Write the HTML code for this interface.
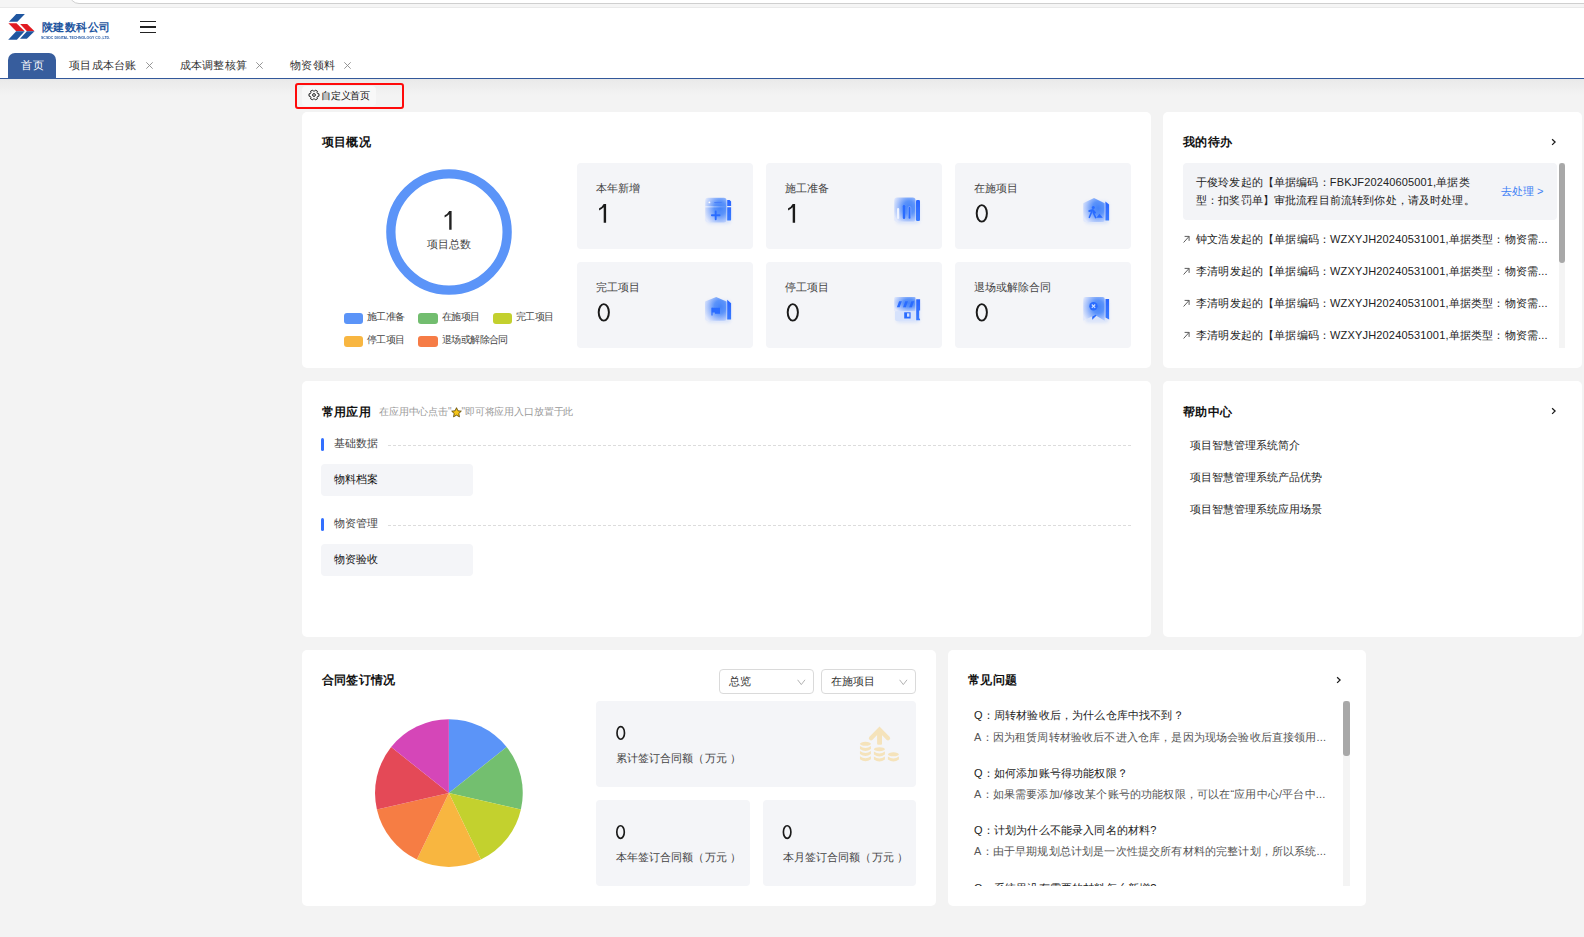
<!DOCTYPE html>
<html><head><meta charset="utf-8">
<style>
*{box-sizing:border-box;margin:0;padding:0}
html,body{width:1584px;height:937px;overflow:hidden;background:#f3f3f3;font-family:"Liberation Sans",sans-serif;color:#333}
.abs{position:absolute}
.t{position:absolute;white-space:nowrap;line-height:1}
#topbar{position:absolute;left:0;top:0;width:1584px;height:8px;background:#f5f5f5;border-bottom:1px solid #e9e9e9}
#addr{position:absolute;left:68.5px;top:-20px;width:1600px;height:24px;background:#fff;border:1px solid #cfcfcf;border-radius:10px}
#header{position:absolute;left:0;top:8px;width:1584px;height:70px;background:#fff}
#tabline{position:absolute;left:0;top:78px;width:1584px;height:1px;background:#33589a}
#shadow{position:absolute;left:0;top:79px;width:1584px;height:16px;background:linear-gradient(#e9e9e9,#f3f3f3)}
.card{position:absolute;background:#fff;border-radius:5px}
.ttl{position:absolute;font-size:12px;letter-spacing:0.4px;font-weight:bold;color:#111;white-space:nowrap;line-height:1}
.box{position:absolute;background:#f4f5f8;border-radius:4px}
.lbl{position:absolute;font-size:11px;color:#444;white-space:nowrap;line-height:1}
.num{position:absolute;font-size:26px;color:#222;white-space:nowrap;line-height:1}
.chev{position:absolute;width:6px;height:6px;border-right:1.5px solid #222;border-top:1.5px solid #222;transform:rotate(45deg)}
</style></head><body>
<div id="topbar"><div id="addr"></div></div>
<div id="header"></div>
<div id="tabline"></div>
<div id="shadow"></div>

<!-- logo -->
<svg class="abs" style="left:0;top:0" width="40" height="44" viewBox="0 0 40 44">
<polygon fill="#1f56a0" points="16.3,14 24.9,14 17.4,21.8 8.9,21.8"/>
<polygon fill="#e01b22" points="8.4,23.2 16.5,23.2 24.7,31.3 16.2,31.3"/>
<polygon fill="#e01b22" points="20.1,24 27.2,24 34.5,31.3 26.9,31.3"/>
<polygon fill="#1f56a0" points="16.2,31.3 24.7,31.3 16.9,39.8 8.2,39.8"/>
<polygon fill="#1f56a0" points="26.9,31.3 34.5,31.3 26.9,38.8 20,38.8"/>
</svg>
<div class="t" style="left:41.5px;top:21.5px;font-size:11px;font-weight:bold;color:#1f56a0;letter-spacing:0.6px">陕建数科公司</div>
<div class="t" style="left:41px;top:34.6px;font-size:5px;font-weight:900;color:#2458a5;transform-origin:0 0;transform:scale(0.71,0.88)">SCSDC DIGITAL TECHNOLOGY CO.,LTD.</div>
<!-- hamburger -->
<div class="abs" style="left:139.5px;top:20.6px;width:16px;height:1.7px;background:#222"></div>
<div class="abs" style="left:139.5px;top:26px;width:16px;height:1.7px;background:#222"></div>
<div class="abs" style="left:139.5px;top:31.5px;width:16px;height:1.7px;background:#222"></div>

<!-- tabs -->
<div class="abs" style="left:8px;top:53px;width:48px;height:26px;background:#375d9d;border-radius:7px 7px 0 0"></div>
<div class="t" style="left:21px;top:59.8px;font-size:11px;letter-spacing:0.6px;color:#fff">首页</div>
<div class="t" style="left:69px;top:59.5px;font-size:11px;letter-spacing:0.25px;color:#333">项目成本台账</div>
<svg class="abs" style="left:146px;top:62px" width="7" height="7" viewBox="0 0 7 7"><path d="M0.3,0.3L6.7,6.7M6.7,0.3L0.3,6.7" stroke="#8a8a8a" stroke-width="0.9"/></svg>
<div class="t" style="left:179.5px;top:59.5px;font-size:11px;letter-spacing:0.25px;color:#333">成本调整核算</div>
<svg class="abs" style="left:256px;top:62px" width="7" height="7" viewBox="0 0 7 7"><path d="M0.3,0.3L6.7,6.7M6.7,0.3L0.3,6.7" stroke="#8a8a8a" stroke-width="0.9"/></svg>
<div class="t" style="left:290px;top:59.5px;font-size:11px;letter-spacing:0.25px;color:#333">物资领料</div>
<svg class="abs" style="left:344px;top:62px" width="7" height="7" viewBox="0 0 7 7"><path d="M0.3,0.3L6.7,6.7M6.7,0.3L0.3,6.7" stroke="#8a8a8a" stroke-width="0.9"/></svg>

<!-- customize button -->
<div class="abs" style="left:302px;top:86px;width:74px;height:20px;background:#f8f8f8;border-radius:4px"></div>
<div class="abs" style="left:295px;top:83px;width:109px;height:26px;border:2px solid #ff0a0a;border-radius:3px"></div>
<div class="t" style="left:321.2px;top:90.5px;font-size:10px;letter-spacing:-0.3px;color:#111">自定义首页</div>
<svg class="abs" style="left:307.5px;top:89px" width="12" height="12" viewBox="0 0 12 12"><path d="M9.62,4.54 L10.97,4.85 L10.97,7.15 L9.62,7.46 L9.07,8.40 L9.48,9.73 L7.49,10.88 L6.54,9.86 L5.46,9.86 L4.51,10.88 L2.52,9.73 L2.93,8.40 L2.38,7.46 L1.03,7.15 L1.03,4.85 L2.38,4.54 L2.93,3.60 L2.52,2.27 L4.51,1.12 L5.46,2.14 L6.54,2.14 L7.49,1.12 L9.48,2.27 L9.07,3.60Z" fill="none" stroke="#222" stroke-width="1" stroke-linejoin="round"/><circle cx="6" cy="6" r="1.4" fill="none" stroke="#222" stroke-width="1"/></svg>

<svg width="0" height="0" style="position:absolute"><defs>
<radialGradient id="gf" cx="0.7" cy="0.42" r="0.78"><stop offset="0" stop-color="#4684f9"/><stop offset="0.35" stop-color="#5b93fa"/><stop offset="0.7" stop-color="#a9c3fb"/><stop offset="1" stop-color="#e2e9fc"/></radialGradient><linearGradient id="wl" x1="0" y1="0" x2="1" y2="0"><stop offset="0" stop-color="#fff" stop-opacity="0.9"/><stop offset="1" stop-color="#fff" stop-opacity="0"/></linearGradient>
<linearGradient id="gs" x1="0" y1="0" x2="0" y2="1"><stop offset="0" stop-color="#2a66ff"/><stop offset="1" stop-color="#3a7bff"/></linearGradient>
<filter id="glw" x="-50%" y="-50%" width="200%" height="200%"><feGaussianBlur stdDeviation="1.6"/></filter><filter id="blr" x="-20%" y="-20%" width="140%" height="140%"><feGaussianBlur stdDeviation="0.35"/></filter>
</defs></svg>
<!-- CARD A -->
<div class="card" style="left:302px;top:112px;width:849px;height:256px"></div>
<div class="ttl" style="left:321.5px;top:136px">项目概况</div>
<!-- ring -->
<svg class="abs" style="left:379.9px;top:162.86px" width="138" height="138" viewBox="0 0 138 138"><circle cx="69" cy="69" r="58.15" fill="none" stroke="#5b94f8" stroke-width="9.3"/></svg>
<div class="t" style="left:426.5px;top:239px;font-size:11px;color:#444">项目总数</div>
<div class="abs" style="left:343.5px;top:312.5px;width:19.5px;height:11px;border-radius:3px;background:#5b94f8"></div>
<div class="abs" style="left:418px;top:312.5px;width:19.5px;height:11px;border-radius:3px;background:#72bd6f"></div>
<div class="abs" style="left:492.5px;top:312.5px;width:19.5px;height:11px;border-radius:3px;background:#c3d02e"></div>
<div class="abs" style="left:343.5px;top:335.8px;width:19.5px;height:11px;border-radius:3px;background:#f8b641"></div>
<div class="abs" style="left:418px;top:335.8px;width:19.5px;height:11px;border-radius:3px;background:#f67c46"></div>
<div class="t" style="left:367px;top:312px;font-size:10px;letter-spacing:-0.6px;color:#444">施工准备</div>
<div class="t" style="left:442px;top:312px;font-size:10px;letter-spacing:-0.6px;color:#444">在施项目</div>
<div class="t" style="left:516px;top:312px;font-size:10px;letter-spacing:-0.6px;color:#444">完工项目</div>
<div class="t" style="left:367px;top:335px;font-size:10px;letter-spacing:-0.6px;color:#444">停工项目</div>
<div class="t" style="left:442px;top:335px;font-size:10px;letter-spacing:-0.6px;color:#444">退场或解除合同</div>
<!-- stat boxes -->
<div class="box" style="left:577px;top:163px;width:176px;height:86px"></div>
<div class="box" style="left:766px;top:163px;width:176px;height:86px"></div>
<div class="box" style="left:955px;top:163px;width:176px;height:86px"></div>
<div class="box" style="left:577px;top:262px;width:176px;height:86px"></div>
<div class="box" style="left:766px;top:262px;width:176px;height:86px"></div>
<div class="box" style="left:955px;top:262px;width:176px;height:86px"></div>
<div class="lbl" style="left:596px;top:182.5px">本年新增</div>
<div class="lbl" style="left:785px;top:182.5px">施工准备</div>
<div class="lbl" style="left:974px;top:182.5px">在施项目</div>
<div class="lbl" style="left:596px;top:281.5px">完工项目</div>
<div class="lbl" style="left:785px;top:281.5px">停工项目</div>
<div class="lbl" style="left:974px;top:281.5px">退场或解除合同</div>
<svg class="abs" style="left:703px;top:195px" width="32" height="32" viewBox="0 0 32 32"><rect x="4" y="6" width="24" height="23" rx="4" fill="#bcd0fb" opacity="0.45" filter="url(#glw)"/><g filter="url(#blr)"><rect x="2.2" y="2.8" width="21.3" height="24.6" rx="2.6" fill="url(#gf)"/><path d="M24.2,5H26.6L28.1,6.5V11H24.2Z M24.2,12.3H28.1V24.4A1.2,1.2 0 0 1 26.9,25.6H24.2Z" fill="url(#gs)"/><circle cx="6.4" cy="7.4" r="0.9" fill="#fff"/><rect x="11.2" y="6.9" width="7.7" height="1.2" rx="0.6" fill="#4a7ef9"/><rect x="2.2" y="11.4" width="21.3" height="0.9" fill="url(#wl)"/><path d="M12.7,16.5V24.2M8.9,20.3H16.6" stroke="#2b6cff" stroke-width="1.9" stroke-linecap="round"/></g></svg>
<svg class="abs" style="left:892px;top:195px" width="32" height="32" viewBox="0 0 32 32"><rect x="4" y="6" width="24" height="23" rx="4" fill="#bcd0fb" opacity="0.45" filter="url(#glw)"/><g filter="url(#blr)"><rect x="2.2" y="2.4" width="21.3" height="24.2" rx="2.6" fill="url(#gf)"/><rect x="24" y="5" width="4" height="21" rx="1.2" fill="url(#gs)"/><rect x="5" y="13" width="2.2" height="11" rx="1.1" fill="#eef3ff"/><rect x="10.8" y="10" width="2.4" height="14" rx="1.2" fill="#2b6cff"/><rect x="16.2" y="11.5" width="2.6" height="12.5" rx="1.3" fill="#2b6cff" stroke="#9cbcff" stroke-width="0.6"/></g></svg>
<svg class="abs" style="left:1081px;top:195px" width="32" height="32" viewBox="0 0 32 32"><rect x="4" y="6" width="24" height="23" rx="4" fill="#bcd0fb" opacity="0.45" filter="url(#glw)"/><g filter="url(#blr)"><path d="M2.2,8.2L13,3L23.7,8.2V25A2,2 0 0 1 21.7,27H4.2A2,2 0 0 1 2.2,25Z" fill="url(#gf)"/><path d="M24.4,6.6L28.1,9.4V25.6H24.4Z" fill="url(#gs)"/><circle cx="12.3" cy="12.6" r="1.5" fill="#2b6cff"/><path d="M8.3,16L11.8,15.2L14,17.6" fill="none" stroke="#2b6cff" stroke-width="2" stroke-linecap="round"/><path d="M10.8,16.5L8.4,22.3M12.3,17.6L14.7,22.6" stroke="#2b6cff" stroke-width="1.6" stroke-linecap="round"/><path d="M15.3,22.8L18.5,18.8L21.8,22.8Z" fill="#2b6cff"/></g></svg>
<svg class="abs" style="left:703px;top:294px" width="32" height="32" viewBox="0 0 32 32"><rect x="4" y="6" width="24" height="23" rx="4" fill="#bcd0fb" opacity="0.45" filter="url(#glw)"/><g filter="url(#blr)"><path d="M2,7.5L13.2,2.9L23.5,7.5V24.8A2,2 0 0 1 21.5,26.8H4A2,2 0 0 1 2,24.8Z" fill="url(#gf)"/><path d="M24.2,5.8L28.1,9.3V25.6H24.2Z" fill="url(#gs)"/><path d="M8.9,13.7H17V19.8H12V18.4H8.9V21.4" fill="#2b6cff"/><path d="M9,13.7V21.4" stroke="#2b6cff" stroke-width="1.2"/></g></svg>
<svg class="abs" style="left:892px;top:294px" width="32" height="32" viewBox="0 0 32 32"><rect x="4" y="6" width="24" height="23" rx="4" fill="#bcd0fb" opacity="0.45" filter="url(#glw)"/><g filter="url(#blr)"><rect x="2.2" y="2.9" width="21.3" height="14.3" rx="1" fill="url(#gf)"/><path d="M3,17.2H23.2V25A2,2 0 0 1 21.2,27H5A2,2 0 0 1 3,25Z" fill="#d6e2fc"/><path d="M24.2,5.2H28.1V16.5H27.2V24L28.1,25.5V26.3H24.2Z" fill="url(#gs)"/><path d="M4.85,13.3H7.6L9.85,7.15H7.1Z M11,13.3H13.75L16,7.15H13.25Z M17.15,13.3H19.9L22.15,7.15H19.4Z" fill="#2b6cff"/><rect x="12.2" y="18.3" width="6.4" height="6.2" fill="#2b6cff"/><rect x="15" y="19.3" width="2.4" height="3.4" fill="#d6e2fc"/></g></svg>
<svg class="abs" style="left:1081px;top:294px" width="32" height="32" viewBox="0 0 32 32"><rect x="4" y="6" width="24" height="23" rx="4" fill="#bcd0fb" opacity="0.45" filter="url(#glw)"/><g filter="url(#blr)"><path d="M2.2,5A2,2 0 0 1 4.2,2.9H21.7A2,2 0 0 1 23.7,5V26.8L14,21L2.2,26.8Z" fill="url(#gf)"/><path d="M24.5,5H28.1V25.6L24.5,23.5Z" fill="url(#gs)"/><circle cx="12.5" cy="12.2" r="4.2" fill="#2b6cff"/><path d="M10.8,10.5L14.2,13.9M14.2,10.5L10.8,13.9" stroke="#cfe0ff" stroke-width="1.1"/><path d="M11.2,25.8V22.6L14.4,20.8L15.6,21.6Z" fill="#2b6cff"/></g></svg>

<!-- CARD B -->
<div class="card" style="left:1163px;top:112px;width:419px;height:256px"></div>
<div class="ttl" style="left:1183px;top:136px">我的待办</div>
<svg class="abs" style="left:1550.5px;top:138px" width="6" height="8" viewBox="0 0 6 8"><path d="M1.1,1.2L4.1,4.05L1.1,6.9" fill="none" stroke="#1a1a1a" stroke-width="1.25"/></svg>
<div class="box" style="left:1183px;top:163px;width:373.5px;height:57px;background:#f3f4f7"></div>
<div class="t" style="left:1196px;top:173px;font-size:11px;letter-spacing:0.15px;color:#222;line-height:18.2px">于俊玲发起的【单据编码：FBKJF20240605001,单据类<br>型：扣奖罚单】审批流程目前流转到你处，请及时处理。</div>
<div class="t" style="left:1501px;top:185.5px;font-size:11px;color:#3d7ff5">去处理 &gt;</div>
<div class="abs" style="left:1559px;top:163px;width:6px;height:185px;background:#f4f4f4"></div>
<div class="abs" style="left:1559px;top:163px;width:6px;height:100px;background:#a8a8a8;border-radius:3px"></div>
<svg class="abs" style="left:1182.5px;top:235px" width="8" height="8" viewBox="0 0 8 8"><path d="M0.6,7.5L6.1,1.4M1.6,1.4H6.1V5.9" fill="none" stroke="#555" stroke-width="0.95"/></svg><div class="t" style="left:1196px;top:233.5px;font-size:11px;letter-spacing:0.17px;color:#222">钟文浩发起的【单据编码：WZXYJH20240531001,单据类型：物资需...</div>
<svg class="abs" style="left:1182.5px;top:267px" width="8" height="8" viewBox="0 0 8 8"><path d="M0.6,7.5L6.1,1.4M1.6,1.4H6.1V5.9" fill="none" stroke="#555" stroke-width="0.95"/></svg><div class="t" style="left:1196px;top:265.5px;font-size:11px;letter-spacing:0.17px;color:#222">李清明发起的【单据编码：WZXYJH20240531001,单据类型：物资需...</div>
<svg class="abs" style="left:1182.5px;top:299px" width="8" height="8" viewBox="0 0 8 8"><path d="M0.6,7.5L6.1,1.4M1.6,1.4H6.1V5.9" fill="none" stroke="#555" stroke-width="0.95"/></svg><div class="t" style="left:1196px;top:297.5px;font-size:11px;letter-spacing:0.17px;color:#222">李清明发起的【单据编码：WZXYJH20240531001,单据类型：物资需...</div>
<svg class="abs" style="left:1182.5px;top:331px" width="8" height="8" viewBox="0 0 8 8"><path d="M0.6,7.5L6.1,1.4M1.6,1.4H6.1V5.9" fill="none" stroke="#555" stroke-width="0.95"/></svg><div class="t" style="left:1196px;top:329.5px;font-size:11px;letter-spacing:0.17px;color:#222">李清明发起的【单据编码：WZXYJH20240531001,单据类型：物资需...</div>

<!-- CARD C -->
<div class="card" style="left:302px;top:381px;width:849px;height:256px"></div>
<div class="ttl" style="left:321.5px;top:405.5px">常用应用</div>
<div class="t" style="left:379px;top:407px;font-size:10px;letter-spacing:-0.15px;color:#999">在应用中心点击"</div>
<svg class="abs" style="left:450.5px;top:407px" width="11" height="11" viewBox="0 0 24 24"><path d="M12,1.5L15.1,8.3L22.5,9.1L17,14.1L18.5,21.5L12,17.8L5.5,21.5L7,14.1L1.5,9.1L8.9,8.3Z" fill="#f5c518" stroke="#5a4300" stroke-width="1.8" stroke-linejoin="round"/></svg>
<div class="t" style="left:461.5px;top:407px;font-size:10px;letter-spacing:-0.15px;color:#999">"即可将应用入口放置于此</div>
<div class="abs" style="left:321px;top:438px;width:3px;height:13px;background:#3370ff;border-radius:1.5px"></div>
<div class="t" style="left:334px;top:438px;font-size:11px;color:#444">基础数据</div>
<div class="abs" style="left:388px;top:445px;width:744px;height:1px;background:repeating-linear-gradient(90deg,#dcdcdc 0 3px,transparent 3px 5px)"></div>
<div class="box" style="left:321px;top:464px;width:152px;height:32px"></div>
<div class="t" style="left:334px;top:474px;font-size:11px;color:#111">物料档案</div>
<div class="abs" style="left:321px;top:518px;width:3px;height:13px;background:#3370ff;border-radius:1.5px"></div>
<div class="t" style="left:334px;top:518px;font-size:11px;color:#444">物资管理</div>
<div class="abs" style="left:388px;top:525px;width:744px;height:1px;background:repeating-linear-gradient(90deg,#dcdcdc 0 3px,transparent 3px 5px)"></div>
<div class="box" style="left:321px;top:544px;width:152px;height:32px"></div>
<div class="t" style="left:334px;top:554px;font-size:11px;color:#111">物资验收</div>

<!-- CARD D -->
<div class="card" style="left:1163px;top:381px;width:419px;height:256px"></div>
<div class="ttl" style="left:1183px;top:405.5px">帮助中心</div>
<svg class="abs" style="left:1550.5px;top:407px" width="6" height="8" viewBox="0 0 6 8"><path d="M1.1,1.2L4.1,4.05L1.1,6.9" fill="none" stroke="#1a1a1a" stroke-width="1.25"/></svg>
<div class="t" style="left:1190px;top:439.5px;font-size:11px;color:#1f1f1f">项目智慧管理系统简介</div>
<div class="t" style="left:1190px;top:471.5px;font-size:11px;color:#1f1f1f">项目智慧管理系统产品优势</div>
<div class="t" style="left:1190px;top:503.5px;font-size:11px;color:#1f1f1f">项目智慧管理系统应用场景</div>

<!-- CARD E -->
<div class="card" style="left:302px;top:650px;width:634px;height:256px"></div>
<div class="ttl" style="left:321.5px;top:673.5px">合同签订情况</div>
<svg class="abs" style="left:0;top:0" width="1584" height="937" viewBox="0 0 1584 937"><path d="M448.90,793.05L448.90,719.20A73.85,73.85 0 0 1 506.64,747.01Z" fill="#5b94f8"/><path d="M448.90,793.05L506.64,747.01A73.85,73.85 0 0 1 520.90,809.48Z" fill="#73bf6f"/><path d="M448.90,793.05L520.90,809.48A73.85,73.85 0 0 1 480.94,859.59Z" fill="#c3d12e"/><path d="M448.90,793.05L480.94,859.59A73.85,73.85 0 0 1 416.86,859.59Z" fill="#f8b640"/><path d="M448.90,793.05L416.86,859.59A73.85,73.85 0 0 1 376.90,809.48Z" fill="#f67d44"/><path d="M448.90,793.05L376.90,809.48A73.85,73.85 0 0 1 391.16,747.01Z" fill="#e44957"/><path d="M448.90,793.05L391.16,747.01A73.85,73.85 0 0 1 448.90,719.20Z" fill="#d546b8"/></svg>
<div class="abs" style="left:718.5px;top:669px;width:95.5px;height:24.5px;border:1px solid #dadada;border-radius:4px;background:#fff"></div>
<div class="t" style="left:728.5px;top:676px;font-size:11px;color:#333">总览</div>
<svg class="abs" style="left:797.0px;top:678.5px" width="9" height="7" viewBox="0 0 9 7"><path d="M0.6,0.8L4.3,5.6L8,0.8" fill="none" stroke="#aaa" stroke-width="0.9"/></svg>
<div class="abs" style="left:820.5px;top:669px;width:95.5px;height:24.5px;border:1px solid #dadada;border-radius:4px;background:#fff"></div>
<div class="t" style="left:830.5px;top:676px;font-size:11px;color:#333">在施项目</div>
<svg class="abs" style="left:899.0px;top:678.5px" width="9" height="7" viewBox="0 0 9 7"><path d="M0.6,0.8L4.3,5.6L8,0.8" fill="none" stroke="#aaa" stroke-width="0.9"/></svg>
<div class="box" style="left:596px;top:701px;width:320px;height:86px"></div>
<div class="box" style="left:596px;top:800px;width:154px;height:86px"></div>
<div class="box" style="left:763px;top:800px;width:153px;height:86px"></div>
<svg class="abs" style="left:852px;top:720px" width="56" height="48" viewBox="0 0 56 48"><ellipse cx="13.45" cy="23.8" rx="5.5" ry="2.0" fill="#f5e3bb"/><path d="M7.949999999999999,26.0 Q13.45,30.0 18.95,26.0 L18.95,29.0 Q13.45,33.0 7.949999999999999,29.0 Z" fill="#f5e3bb"/><path d="M7.949999999999999,31.1 Q13.45,35.1 18.95,31.1 L18.95,34.1 Q13.45,38.1 7.949999999999999,34.1 Z" fill="#f5e3bb"/><path d="M7.949999999999999,36.2 Q13.45,40.2 18.95,36.2 L18.95,39.2 Q13.45,43.2 7.949999999999999,39.2 Z" fill="#f5e3bb"/><ellipse cx="27.4" cy="29.2" rx="5.5" ry="2.0" fill="#f5e3bb"/><path d="M21.9,31.4 Q27.4,35.4 32.9,31.4 L32.9,34.4 Q27.4,38.4 21.9,34.4 Z" fill="#f5e3bb"/><path d="M21.9,36.5 Q27.4,40.5 32.9,36.5 L32.9,39.5 Q27.4,43.5 21.9,39.5 Z" fill="#f5e3bb"/><ellipse cx="41.4" cy="34.3" rx="5.5" ry="2.0" fill="#f5e3bb"/><path d="M35.9,36.5 Q41.4,40.5 46.9,36.5 L46.9,39.5 Q41.4,43.5 35.9,39.5 Z" fill="#f5e3bb"/><path d="M19,18.2L27.5,9.6L36,18.2" fill="none" stroke="#f5e3bb" stroke-width="4.3" stroke-linecap="round" stroke-linejoin="miter"/><rect x="25.1" y="10" width="4.9" height="14.8" rx="1" fill="#f5e3bb"/></svg>
<div class="t" style="left:616px;top:752.8px;font-size:11px;color:#444">累计签订合同额（<span style="margin-left:1px">万元</span> ）</div>
<div class="t" style="left:616px;top:852.3px;font-size:11px;color:#444">本年签订合同额（<span style="margin-left:1px">万元</span> ）</div>
<div class="t" style="left:782.5px;top:852.3px;font-size:11px;color:#444">本月签订合同额（<span style="margin-left:1px">万元</span> ）</div>

<!-- CARD F -->
<div class="card" style="left:948px;top:650px;width:418px;height:256px"></div>
<div class="ttl" style="left:968px;top:674px">常见问题</div>
<svg class="abs" style="left:1335.5px;top:676px" width="6" height="8" viewBox="0 0 6 8"><path d="M1.1,1.2L4.1,4.05L1.1,6.9" fill="none" stroke="#1a1a1a" stroke-width="1.25"/></svg>
<div class="abs" style="left:968px;top:700px;width:372px;height:186px;overflow:hidden"><div class="t" style="left:6px;top:10.3px;font-size:11px;letter-spacing:0.17px;color:#222">Q：周转材验收后，为什么仓库中找不到？</div><div class="t" style="left:6px;top:31.5px;font-size:11px;letter-spacing:0.17px;color:#555">A：因为租赁周转材验收后不进入仓库，是因为现场会验收后直接领用...</div><div class="t" style="left:6px;top:67.7px;font-size:11px;letter-spacing:0.17px;color:#222">Q：如何添加账号得功能权限？</div><div class="t" style="left:6px;top:88.9px;font-size:11px;letter-spacing:0.17px;color:#555">A：如果需要添加/修改某个账号的功能权限，可以在“应用中心/平台中...</div><div class="t" style="left:6px;top:125.1px;font-size:11px;letter-spacing:0.17px;color:#222">Q：计划为什么不能录入同名的材料?</div><div class="t" style="left:6px;top:146.3px;font-size:11px;letter-spacing:0.17px;color:#555">A：由于早期规划总计划是一次性提交所有材料的完整计划，所以系统...</div><div class="t" style="left:6px;top:182.5px;font-size:11px;letter-spacing:0.17px;color:#222">Q：系统里没有需要的材料怎么新增?</div></div>
<div class="abs" style="left:1343.2px;top:701px;width:6.5px;height:185px;background:#f4f4f4"></div>
<div class="abs" style="left:1343.2px;top:701px;width:6.5px;height:55px;background:#a8a8a8;border-radius:3px"></div>

<svg class="abs" style="left:0;top:0" width="1584" height="937" viewBox="0 0 1584 937"><path transform="translate(599.1,203.9)" d="M4.6,0H7V18.8H4.6V3.4Q2.6,5.3 0,6.6V4.4Q3,3 4.6,0Z" fill="#1a1a1a"/><path transform="translate(788.1,203.9)" d="M4.6,0H7V18.8H4.6V3.4Q2.6,5.3 0,6.6V4.4Q3,3 4.6,0Z" fill="#1a1a1a"/><path transform="translate(444.6,210.9)" d="M4.6,0H7V18.8H4.6V3.4Q2.6,5.3 0,6.6V4.4Q3,3 4.6,0Z" fill="#222"/><ellipse cx="981.8" cy="213.35" rx="5.1" ry="8.25" fill="none" stroke="#1a1a1a" stroke-width="1.95"/><ellipse cx="603.8" cy="312.35" rx="5.1" ry="8.25" fill="none" stroke="#1a1a1a" stroke-width="1.95"/><ellipse cx="792.8" cy="312.35" rx="5.1" ry="8.25" fill="none" stroke="#1a1a1a" stroke-width="1.95"/><ellipse cx="981.8" cy="312.35" rx="5.1" ry="8.25" fill="none" stroke="#1a1a1a" stroke-width="1.95"/><ellipse cx="620.75" cy="732.9" rx="3.75" ry="6.3" fill="none" stroke="#1a1a1a" stroke-width="1.65"/><ellipse cx="620.55" cy="832.0" rx="3.75" ry="6.3" fill="none" stroke="#1a1a1a" stroke-width="1.65"/><ellipse cx="787.15" cy="832.0" rx="3.75" ry="6.3" fill="none" stroke="#1a1a1a" stroke-width="1.65"/></svg>
</body></html>
